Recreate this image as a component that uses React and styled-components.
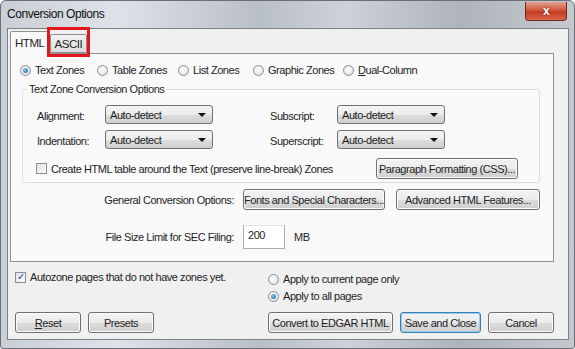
import React from "react";
import styled, { createGlobalStyle } from "styled-components";

const GlobalStyle = createGlobalStyle`
  html, body {
    margin: 0;
    padding: 0;
    background: #ffffff;
  }
  body {
    font-family: "Liberation Sans", Arial, sans-serif;
    font-size: 11px;
    letter-spacing: -0.45px;
    color: #1e1e1e;
  }
`;

const Window = styled.div`
  width: 575px;
  height: 349px;
  box-sizing: border-box;
  border: 1px solid #6b6f75;
  border-radius: 6px 6px 3px 3px;
  background: linear-gradient(90deg, #c9cfd6 0%, #dfe3e8 20%, #b9bfc6 45%, #cdd2d8 60%, #aeb4bb 80%, #c4c9cf 100%);
  display: flex;
  flex-direction: column;
  padding: 0 5px 8px 6px;
  overflow: hidden;
`;

const TitleBar = styled.div`
  height: 27px;
  display: flex;
  align-items: flex-start;
  justify-content: space-between;
`;

const Title = styled.div`
  padding: 6px 0 0 0;
  font-size: 12px;
  color: #111;
`;

const CloseButton = styled.div`
  width: 40px;
  height: 18px;
  margin: 1px 2px 0 0;
  border: 1px solid #6e2a22;
  border-top: none;
  border-radius: 0 0 4px 4px;
  background: linear-gradient(180deg, #e4a08d 0%, #d2583f 45%, #c23b22 55%, #d9674b 100%);
  display: flex;
  align-items: center;
  justify-content: center;
  color: #fff;
  font-weight: bold;
  font-size: 12px;
  text-shadow: 0 0 2px #5a1a10;
`;

const Client = styled.div`
  flex: 1;
  background: #f0f0f0;
  border: 1px solid #7b8087;
  display: flex;
  flex-direction: column;
  padding: 1px 14px 0 1px;
`;

const TabStrip = styled.div`
  height: 23px;
  display: flex;
  align-items: flex-end;
  position: relative;
  z-index: 1;
`;

const Tab = styled.div`
  box-sizing: border-box;
  height: ${(p) => (p.$active ? "23px" : "19px")};
  padding: 0 4px;
  margin-left: ${(p) => (p.$active ? "1px" : "0")};
  margin-bottom: ${(p) => (p.$active ? "-1px" : "0")};
  display: flex;
  align-items: center;
  background: ${(p) => (p.$active ? "#f9f9f9" : "linear-gradient(180deg, #f2f2f2, #dcdcdc)")};
  border: 1px solid #8e8f8f;
  border-bottom: ${(p) => (p.$active ? "none" : "1px solid #8e8f8f")};
  border-radius: 2px 2px 0 0;
  font-size: 11.5px;
  position: relative;
`;

const Highlight = styled.span`
  position: absolute;
  left: -4px;
  top: -8px;
  right: -4px;
  bottom: -5px;
  border: 3px solid #e3161e;
`;

const Panel = styled.div`
  height: 209px;
  box-sizing: border-box;
  background: #f9f9f9;
  border: 1px solid #8e8f8f;
  margin-left: 1px;
  display: flex;
  flex-direction: column;
  padding: 9px 12px 0 9px;
`;

const RadioRow = styled.div`
  display: grid;
  grid-template-columns: 77px 81px 75px 90px auto;
  align-items: center;
  height: 14px;
`;

const Choice = styled.label`
  display: flex;
  align-items: center;
  gap: 4px;
  white-space: nowrap;
`;

const RadioDot = styled.span`
  width: 11px;
  height: 11px;
  box-sizing: border-box;
  border-radius: 50%;
  border: 1px solid #8a8f96;
  background: radial-gradient(circle at 45% 40%, #ffffff, #d7dbe0);
  display: inline-flex;
  align-items: center;
  justify-content: center;
  &::after {
    content: "";
    display: ${(p) => (p.$on ? "block" : "none")};
    width: 5px;
    height: 5px;
    border-radius: 50%;
    background: radial-gradient(circle at 40% 35%, #7fc6f2, #1b5e97);
  }
`;

const CheckBox = styled.span`
  width: 11px;
  height: 11px;
  box-sizing: border-box;
  border: 1px solid #8a8f96;
  background: linear-gradient(135deg, #dfe3e7, #fafbfc);
  display: inline-flex;
  align-items: center;
  justify-content: center;
  color: #2a3f8f;
  font-size: 10px;
  line-height: 1;
`;

const Group = styled.fieldset`
  margin: 6px 0 0 2px;
  width: 518px;
  box-sizing: border-box;
  height: 100px;
  border: 1px solid #d5dfe5;
  border-radius: 3px;
  padding: 0 0 0 13px;
  display: flex;
  flex-direction: column;
  legend {
    padding: 0 2px;
    margin-left: -9px;
  }
`;

const FieldGrid = styled.div`
  display: grid;
  grid-template-columns: 69px 164px 68px 108px;
  row-gap: 6px;
  margin-top: 10px;
  align-items: center;
`;

const FieldLabel = styled.span`
  padding-left: 1px;
  padding-top: 2px;
`;

const Select = styled.div`
  width: 108px;
  height: 19px;
  box-sizing: border-box;
  border: 1px solid #707070;
  border-radius: 3px;
  background: linear-gradient(180deg, #f4f4f4 0%, #ebebeb 50%, #dddddd 51%, #cfcfcf 100%);
  display: flex;
  align-items: center;
  justify-content: space-between;
  padding: 0 6px 0 4px;
  &::after {
    content: "";
    border-left: 4px solid transparent;
    border-right: 4px solid transparent;
    border-top: 4px solid #111;
  }
`;

const TableRow = styled.div`
  display: flex;
  align-items: center;
  justify-content: space-between;
  margin-top: 9px;
  padding-right: 21px;
`;

const Button = styled.button`
  font-family: inherit;
  font-size: 11px;
  letter-spacing: inherit;
  white-space: nowrap;
  color: #1e1e1e;
  height: 21px;
  width: ${(p) => p.$w}px;
  box-sizing: border-box;
  border: 1px solid ${(p) => (p.$focus ? "#3c7fb1" : "#707070")};
  border-radius: 3px;
  padding: 0;
  background: linear-gradient(180deg, #f2f2f2 0%, #ebebeb 50%, #dddddd 51%, #cfcfcf 100%);
  box-shadow: ${(p) => (p.$focus ? "inset 0 0 0 1px #94ccef" : "inset 0 0 0 1px #fcfcfc")};
`;

const OptionRow = styled.div`
  display: flex;
  align-items: center;
  margin-top: ${(p) => p.$top}px;
`;

const RightLabel = styled.span`
  width: ${(p) => p.$w}px;
  text-align: right;
  margin-right: 9px;
`;

const SizeInput = styled.div`
  width: 42px;
  height: 24px;
  box-sizing: border-box;
  border: 1px solid #abadb3;
  border-top-color: #e2e3ea;
  background: #fff;
  padding: 3px 0 0 4px;
  margin-right: 9px;
`;

const ButtonGap = styled.div`
  width: ${(p) => p.$w}px;
`;

const Bottom = styled.div`
  flex: 1;
  display: flex;
  flex-direction: column;
  padding: 9px 0 0 6px;
`;

const BottomOptions = styled.div`
  display: grid;
  grid-template-columns: 253px auto;
  align-items: start;
`;

const RadioStack = styled.div`
  display: flex;
  flex-direction: column;
  gap: 5px;
  padding-top: 2px;
`;

const ButtonRow = styled.div`
  display: flex;
  align-items: center;
  margin-top: 10px;
  gap: 7px;
`;

const Spacer = styled.div`
  flex: 1;
`;

export default function App() {
  return (
    <>
      <GlobalStyle />
      <Window>
        <TitleBar>
          <Title>Conversion Options</Title>
          <CloseButton>x</CloseButton>
        </TitleBar>
        <Client>
          <TabStrip>
            <Tab $active>HTML</Tab>
            <Tab>
              ASCII
              <Highlight />
            </Tab>
          </TabStrip>
          <Panel>
            <RadioRow>
              <Choice><RadioDot $on />Text Zones</Choice>
              <Choice><RadioDot />Table Zones</Choice>
              <Choice><RadioDot />List Zones</Choice>
              <Choice><RadioDot />Graphic Zones</Choice>
              <Choice><RadioDot /><span><u>D</u>ual-Column</span></Choice>
            </RadioRow>
            <Group>
              <legend>Text Zone Conversion Options</legend>
              <FieldGrid>
                <FieldLabel>Alignment:</FieldLabel>
                <Select>Auto-detect</Select>
                <FieldLabel>Subscript:</FieldLabel>
                <Select>Auto-detect</Select>
                <FieldLabel>Indentation:</FieldLabel>
                <Select>Auto-detect</Select>
                <FieldLabel>Superscript:</FieldLabel>
                <Select>Auto-detect</Select>
              </FieldGrid>
              <TableRow>
                <Choice>
                  <CheckBox />
                  Create HTML table around the Text (preserve line-break) Zones
                </Choice>
                <Button $w={142}>Paragraph Formatting (CSS)...</Button>
              </TableRow>
            </Group>
            <OptionRow $top={6}>
              <RightLabel $w={214}>General Conversion Options:</RightLabel>
              <Button $w={142}>Fonts and Special Characters...</Button>
              <ButtonGap $w={11} />
              <Button $w={144}>Advanced HTML Features...</Button>
            </OptionRow>
            <OptionRow $top={15}>
              <RightLabel $w={214}>File Size Limit for SEC Filing:</RightLabel>
              <SizeInput>200</SizeInput>
              <span>MB</span>
            </OptionRow>
          </Panel>
          <Bottom>
            <BottomOptions>
              <Choice>
                <CheckBox>✓</CheckBox>
                Autozone pages that do not have zones yet.
              </Choice>
              <RadioStack>
                <Choice><RadioDot />Apply to current page only</Choice>
                <Choice><RadioDot $on />Apply to all pages</Choice>
              </RadioStack>
            </BottomOptions>
            <ButtonRow>
              <Button $w={66}><u>R</u>eset</Button>
              <Button $w={66}>Presets</Button>
              <Spacer />
              <Button $w={125}>Convert to EDGAR HTML</Button>
              <Button $w={81} $focus>Save and Close</Button>
              <Button $w={66}>Cancel</Button>
            </ButtonRow>
          </Bottom>
        </Client>
      </Window>
    </>
  );
}
